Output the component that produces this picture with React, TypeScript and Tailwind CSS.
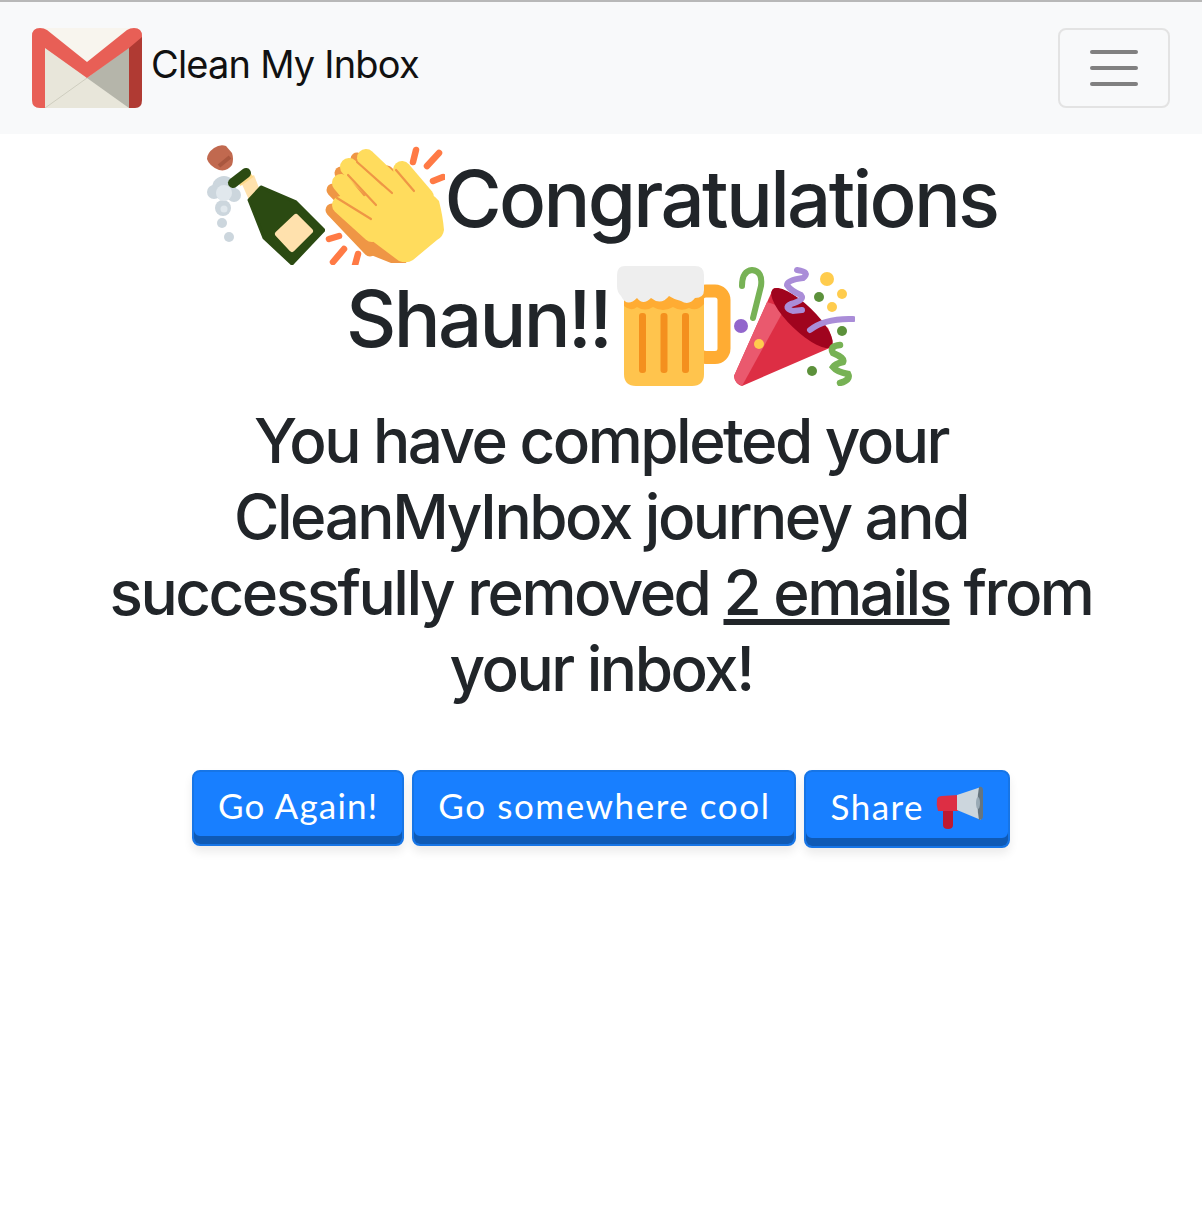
import React from 'react';

const GmailLogo = () => (
  <svg width="110" height="80" viewBox="0 0 110 80" className="shrink-0">
    <rect x="0" y="0" width="110" height="80" rx="8" fill="#e8e6da" />
    <path d="M6 0H102L55 36Z" fill="#f8f5ee" />
    <path d="M97 14V80H103Q110 80 110 72V8Z" fill="#b03a33" />
    <path d="M55 50L97 19V80Z" fill="#b5b5aa" />
    <path d="M13 80L55 50" stroke="#cfcdbf" strokeWidth="1" />
    <path d="M8 0Q12 0 15 2L55 34L95 2Q98 0 102 0Q110 0 110 8V9L97 20L55 50L13 20V80H8Q0 80 0 72V8Q0 0 8 0Z" fill="#e85f56" />
  </svg>
);

const Champagne = () => (
  <svg width="120" height="120" viewBox="0 0 120 120" className="inline-block align-[-26px] -mb-[12px]">
    <circle cx="19" cy="43" r="12" fill="#ccd6dd" />
    <circle cx="9" cy="47" r="7" fill="#ccd6dd" />
    <circle cx="29" cy="50" r="7" fill="#ccd6dd" />
    <circle cx="18" cy="63" r="8" fill="#ccd6dd" />
    <circle cx="17" cy="78" r="5" fill="#ccd6dd" />
    <circle cx="24" cy="92" r="5" fill="#ccd6dd" />
    <circle cx="19" cy="48" r="8" fill="#e1e8ed" />
    <circle cx="19" cy="64" r="3.500" fill="#e1e8ed" />
    <path d="M9 3Q15 -1 21 1L27 8Q29 14 27 20Q22 27 14 25Q4 21 2 14Q2 8 9 3Z" fill="#c1694f" />
    <path d="M14 21L25 12" stroke="#a9573f" strokeWidth="4" />
    <path d="M36 37L49 30L56 48L44 55Z" fill="#ffe1ad" />
    <path d="M34 39L47 30" stroke="#fdd888" strokeWidth="5" />
    <path d="M28 38L41 28" stroke="#2b4a12" strokeWidth="10" strokeLinecap="round" />
    <path d="M44 55L56 42L91 57L119 85L87 119L59 93Z" fill="#2b4a12" stroke="#2b4a12" strokeWidth="3" strokeLinejoin="round" />
    <path d="M91 72L105 86L87 104L73 89Z" fill="#ffe1ad" stroke="#ffe1ad" strokeWidth="6" strokeLinejoin="round" />
  </svg>
);

const Clap = () => (
  <svg width="120" height="120" viewBox="0 0 120 120" className="inline-block align-[-26px] -mb-[12px]">
    <g stroke="#ef9645" strokeWidth="13" strokeLinecap="round">
      <path d="M7 65L45 105" />
      <path d="M8 45L40 78" />
      <path d="M16 28L50 65" />
      <path d="M32 14L70 60" />
      <path d="M62 27L90 60" />
    </g>
    <path d="M1 66L41 108L66 118H81L100 60L24 50Z" fill="#ef9645" />
    <g stroke="#ffdc5d" strokeWidth="18" strokeLinecap="round">
      <path d="M41 13L82 52" />
      <path d="M24 22L62 58" />
      <path d="M16 38L47 75" />
      <path d="M16 60L47 88" />
      <path d="M77 25L100 52" />
    </g>
    <path d="M12 66L60 40L88 40Q108 48 114 56Q118 72 119 85Q118 92 112 95L88 115Q82 119 74 116L42 92Z" fill="#ffdc5d" />
    <path d="M32 17L67 48M23 30L51 60M12 53L46 74M71 25L89 46" stroke="#ef9645" strokeWidth="2.200" fill="none" strokeLinecap="round" />
    <g stroke="#ff7a45" strokeWidth="6.500" strokeLinecap="round">
      <path d="M91 5L88 17" />
      <path d="M114 8L102 21" />
      <path d="M118 32L108 36" />
      <path d="M4 94L14 91" />
      <path d="M19 104L8 117" />
      <path d="M33 109L30 120" />
    </g>
  </svg>
);

const Beer = () => (
  <svg width="120" height="120" viewBox="0 0 120 120" className="ml-[7px] inline-block align-[-26px] -mb-[13px]">
    <rect x="80" y="25" width="27" height="66.500" rx="9" fill="none" stroke="#ffac33" strokeWidth="13" />
    <path d="M7 30H87V108Q87 120 75 120H19Q7 120 7 108Z" fill="#ffc44d" />
    <path d="M7 20H87V38Q80 46 72 42Q64 46 56 41Q46 47 36 41Q28 46 20 41Q14 46 7 40Z" fill="#ffac33" />
    <g fill="#f4901e">
      <rect x="22" y="47" width="7" height="60" rx="3" />
      <rect x="43.500" y="47" width="7" height="60" rx="3" />
      <rect x="65" y="47" width="7" height="60" rx="3" />
    </g>
    <path d="M8 0H78Q87 0 87 9V24Q87 32 78 32Q72 40 64 35Q58 34 52 30Q44 40 34 32Q26 40 20 32Q10 42 4 30Q0 26 0 20V9Q0 0 8 0Z" fill="#eeeeee" />
  </svg>
);

const Party = () => (
  <svg width="122" height="120" viewBox="0 0 122 120" className="-ml-1 mr-[1px] inline-block align-[-26px] -mb-[13px]">
    <path d="M40 23Q44 20 52 26L95 62Q100 72 99 81L9 120Q2 118 1 110Z" fill="#dd2e44" />
    <path d="M34 36L1 110Q1 116 9 120L52 42Z" fill="#ea596e" />
    <ellipse cx="69" cy="52" rx="41" ry="13" transform="rotate(44 69 52)" fill="#a0041e" />
    <circle cx="26" cy="78" r="5" fill="#ffcc4d" />
    <circle cx="8" cy="60" r="7" fill="#9266cc" />
    <circle cx="94" cy="13" r="7" fill="#ffcc4d" />
    <circle cx="109" cy="28" r="5" fill="#ffcc4d" />
    <circle cx="99" cy="41" r="5" fill="#ffcc4d" />
    <circle cx="86" cy="31" r="5" fill="#5c913b" />
    <circle cx="109" cy="65" r="5" fill="#5c913b" />
    <circle cx="79" cy="105" r="5" fill="#5c913b" />
    <path d="M9 20Q9 5 19 4Q30 5 28 20L20 52" fill="none" stroke="#77b255" strokeWidth="6" strokeLinecap="round" />
    <path d="M64 4Q78 6 70 12Q54 14 54 19Q58 25 68 29Q72 34 58 38Q50 42 60 45L69 44" fill="none" stroke="#aa8dd8" strokeWidth="6" strokeLinecap="round" />
    <path d="M77 64Q92 52 120 53" fill="none" stroke="#aa8dd8" strokeWidth="6" strokeLinecap="round" />
    <path d="M107 79Q96 80 100 87Q112 92 110 96Q102 98 100 101Q104 106 115 108Q118 114 107 117" fill="none" stroke="#77b255" strokeWidth="6.500" strokeLinecap="round" />
  </svg>
);

const Megaphone = () => (
  <svg width="48" height="48" viewBox="0 0 48 48" className="shrink-0">
    <path d="M7 26H17V42Q17 46 12 46Q7 46 7 42Z" fill="#be1931" />
    <path d="M1 16Q0 22 2 28H22V12L6 13Q2 13 1 16Z" fill="#dd2e44" />
    <path d="M21 12L45 4V37L21 27Z" fill="#ccd6dd" />
    <path d="M43 4Q47 3 47 8V33Q47 37 43 37Q40 20 43 4Z" fill="#66757f" />
    <ellipse cx="42" cy="20" rx="2" ry="6" fill="#99aab5" />
  </svg>
);

const ActionButton = ({ children, className }: { children: React.ReactNode; className: string }) => (
  <button
    className={`flex items-center gap-3 rounded-lg border-2 border-[#1775e6] bg-[#187fff] px-6 pb-[5px] text-[35px] text-white shadow-[inset_0_-8px_0_#0f5ab5,0_6px_10px_rgba(0,0,0,0.08)] ${className}`}
  >
    {children}
  </button>
);

export default function App() {
  return (
    <div className="min-h-[1226px] bg-white font-['Inter','Liberation_Sans',sans-serif] text-[#212529]">
      <nav className="flex h-[134px] items-center justify-between border-t-2 border-[#b8b8b8] bg-[#f8f9fa] pl-8 pr-8">
        <a className="flex items-center gap-[9px] text-[38px] tracking-[-0.8px] text-[#111]">
          <GmailLogo />
          <span className="pb-2">Clean My Inbox</span>
        </a>
        <button className="flex h-20 w-[112px] flex-col items-center justify-center gap-3 rounded-lg border-2 border-[#e3e3e3]">
          <span className="h-1 w-12 rounded-sm bg-[#808080]" />
          <span className="h-1 w-12 rounded-sm bg-[#808080]" />
          <span className="h-1 w-12 rounded-sm bg-[#808080]" />
        </button>
      </nav>
      <main className="flex flex-col items-center px-[100px] text-center">
        <h1 className="mt-[5px] text-[78px] font-medium leading-[120px] tracking-[-2.7px] whitespace-nowrap">
          <Champagne />
          <Clap />
          Congratulations
          <br />
          Shaun!!
          <Beer />
          <Party />
        </h1>
        <h2 className="mt-[24px] text-[62px] font-medium leading-[76px] tracking-[-2.5px]">
          You have completed your CleanMyInbox journey and successfully removed <u>2 emails</u> from your inbox!
        </h2>
        <div className="mt-[63px] flex items-start gap-2 font-['Lato','Open_Sans',sans-serif]">
          <ActionButton className="h-[76px] tracking-[1.2px]">Go Again!</ActionButton>
          <ActionButton className="h-[76px] tracking-[1.56px]">Go somewhere cool</ActionButton>
          <ActionButton className="h-[78px] tracking-[1.5px]">
            Share
            <Megaphone />
          </ActionButton>
        </div>
      </main>
    </div>
  );
}
